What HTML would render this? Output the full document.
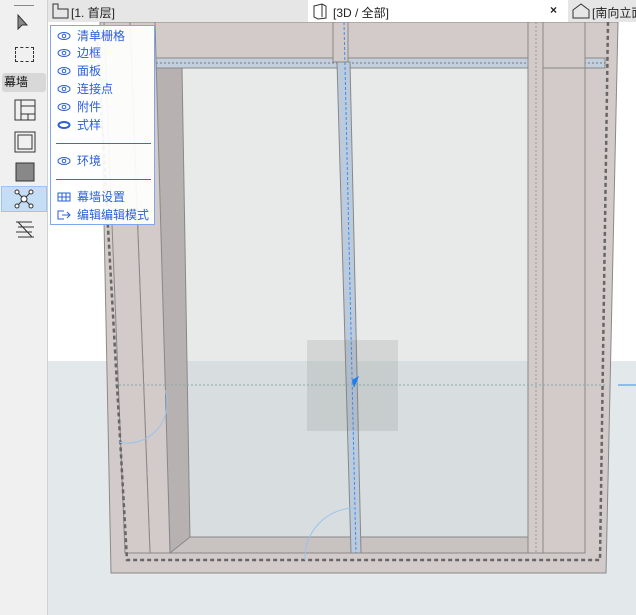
<!DOCTYPE html>
<html><head><meta charset="utf-8"><style>
*{margin:0;padding:0;box-sizing:border-box}
body{width:636px;height:615px;overflow:hidden;background:#fff;font-family:"Liberation Sans","Noto Sans CJK SC",sans-serif;position:relative}
.abs{position:absolute}
#tb{left:0;top:0;width:48px;height:615px;background:#f0f0f0;border-right:1px solid #d0d0d0}
#tabs{left:48px;top:0;width:588px;height:22px;background:#e6e6e6}
.tab{font-size:12px;color:#222;top:4px}
#menu{left:50px;top:25px;width:105px;height:200px;background:rgba(255,255,255,.93);border:1px solid #7fa7ee}
.mi{position:absolute;left:0;font-size:12px;color:#2a5fd8;height:16px;line-height:16px}
.mi span{position:absolute;left:26px;white-space:nowrap}
.mi svg{position:absolute;left:6px;top:3px}
.hr{position:absolute;left:5px;width:95px;height:1px;background:#3a6ad8}
</style></head><body>
<svg class="abs" style="left:48px;top:22px" width="588" height="593" viewBox="48 22 588 593">
<rect x="48" y="22" width="588" height="593" fill="#fff"/>
<rect x="48" y="361" width="588" height="254" fill="#e3e8ea"/>
<!-- outer frame -->
<polygon points="100,22 618,22 606,573 111,573" fill="#d3cbc9" stroke="#8a8a8a"/>
<!-- glass -->
<polygon points="180,68 528,68 528,540 190,540" fill="#e8eaea"/>
<polygon points="183,361 528,361 528,540 190,540" fill="#d8dedf"/>
<!-- top transom -->
<rect x="155" y="58" width="450" height="10" fill="#c3cfdc" stroke="#888"/>
<line x1="120" y1="63" x2="605" y2="63" stroke="#777" stroke-dasharray="2,2"/>
<!-- left jamb inner -->
<polygon points="155,68 182,68 190,540 170,553" fill="#b7b2b1" stroke="#888"/>
<polygon points="130,22 155,22 170,553 150,553" fill="#d3cbc9" stroke="#888"/>
<polygon points="104,22 130,22 150,553 125,553" fill="#d3cbc9" stroke="#888"/>
<!-- bottom sill -->
<polygon points="190,537 528,537 528,553 170,553" fill="#c8c2c1" stroke="#888"/>
<!-- right mullions -->
<rect x="528" y="22" width="15" height="531" fill="#d3cbc9" stroke="#888"/>
<rect x="543" y="22" width="42" height="531" fill="#d3cbc9" stroke="#888"/>
<line x1="543" y1="68" x2="585" y2="68" stroke="#888"/>
<line x1="536" y1="22" x2="536" y2="553" stroke="#999" stroke-dasharray="2,2"/>
<!-- center mullion -->
<rect x="333" y="22" width="15" height="40" fill="#d3cbc9" stroke="#888"/>
<polygon points="337,62 350,62 361,553 351,553" fill="#bccbdc" stroke="#888"/>
<line x1="344" y1="22" x2="356" y2="553" stroke="#3a8ef0" stroke-dasharray="3,2"/>
<!-- highlight square -->
<rect x="307" y="340" width="91" height="91" fill="rgba(120,120,120,.18)"/>
<polygon points="352,380 359,376 354,388" fill="#1a7ef0"/>
<!-- horizontal dotted -->
<line x1="115" y1="385" x2="605" y2="385" stroke="#8aa" stroke-dasharray="2,2"/>
<line x1="618" y1="385" x2="636" y2="385" stroke="#3a8ef0"/>
<!-- dashed boundary -->
<polyline points="97,35 127,560 600,560 608,22" fill="none" stroke="#666" stroke-width="2.5" stroke-dasharray="4,3"/>
<!-- arcs -->
<path d="M118,442 A40,40 0 0 0 165,390" fill="none" stroke="#9bc2ee"/>
<path d="M305,560 A50,50 0 0 1 355,508" fill="none" stroke="#9bc2ee"/>
</svg>
<div id="tb" class="abs">
<div class="abs" style="left:14px;top:5px;width:20px;height:1px;background:#888"></div>
<svg class="abs" style="left:15px;top:13px" width="16" height="18"><path d="M3,2 L3,16 L7,12 L12,12 Z" fill="#888" stroke="#333"/></svg>
<div class="abs" style="left:15px;top:47px;width:19px;height:15px;border:1px dashed #333"></div>
<div class="abs" style="left:2px;top:73px;width:44px;height:19px;background:#d8d8d8;border-radius:3px;font-size:12px;line-height:19px;padding-left:2px;color:#111">幕墙</div>
<svg class="abs" style="left:13px;top:98px" width="24" height="24"><rect x="2" y="2" width="20" height="20" fill="none" stroke="#333"/><path d="M8,2V22M8,8H22M8,16H22M15,16V22" stroke="#333" fill="none"/></svg>
<svg class="abs" style="left:13px;top:130px" width="24" height="24"><rect x="2" y="2" width="20" height="20" fill="none" stroke="#333"/><rect x="5" y="5" width="14" height="14" fill="none" stroke="#333"/></svg>
<svg class="abs" style="left:13px;top:160px" width="24" height="24"><rect x="3" y="3" width="18" height="18" fill="#888" stroke="#333"/></svg>
<div class="abs" style="left:1px;top:186px;width:46px;height:26px;background:#c5def5;border:1px solid #9cc6ef"></div>
<svg class="abs" style="left:13px;top:188px" width="22" height="22"><path d="M4,4L18,18M18,4L4,18" stroke="#333"/><circle cx="11" cy="11" r="3" fill="#fff" stroke="#333"/><circle cx="4" cy="4" r="2" fill="#fff" stroke="#333"/><circle cx="18" cy="4" r="2" fill="#fff" stroke="#333"/><circle cx="4" cy="18" r="2" fill="#fff" stroke="#333"/><circle cx="18" cy="18" r="2" fill="#fff" stroke="#333"/></svg>
<svg class="abs" style="left:14px;top:219px" width="22" height="20"><path d="M2,3H18M4,8H20M2,13H18M4,18H20M4,3L18,18" stroke="#333" fill="none"/></svg>
</div>
<div id="tabs" class="abs"></div>
<svg class="abs" style="left:52px;top:3px" width="18" height="16"><path d="M1,1H6V6H11V6H16V15H1Z" fill="none" stroke="#333"/></svg>
<div class="abs tab" style="left:71px">[1. 首层]</div>
<div class="abs" style="left:308px;top:0;width:260px;height:22px;background:#fff"></div>
<svg class="abs" style="left:312px;top:3px" width="16" height="17"><path d="M2,3L10,1L14,3V15L6,16L2,14Z M10,1V14" fill="none" stroke="#333"/></svg>
<div class="abs tab" style="left:333px">[3D / 全部]</div>
<div class="abs tab" style="left:550px;top:3px;font-weight:bold">×</div>
<svg class="abs" style="left:572px;top:3px" width="18" height="16"><path d="M1,7L9,1L17,7V15H1Z" fill="none" stroke="#333"/></svg>
<div class="abs tab" style="left:592px;white-space:nowrap">[南向立面</div>
<div id="menu" class="abs">
<div class="mi" style="top:2px"><svg width="14" height="10"><ellipse cx="7" cy="5" rx="6" ry="3.5" fill="none" stroke="#2a5fd8"/><circle cx="7" cy="5" r="1.8" fill="none" stroke="#2a5fd8"/></svg><span>清单栅格</span></div>
<div class="mi" style="top:19px"><svg width="14" height="10"><ellipse cx="7" cy="5" rx="6" ry="3.5" fill="none" stroke="#2a5fd8"/><circle cx="7" cy="5" r="1.8" fill="none" stroke="#2a5fd8"/></svg><span>边框</span></div>
<div class="mi" style="top:37px"><svg width="14" height="10"><ellipse cx="7" cy="5" rx="6" ry="3.5" fill="none" stroke="#2a5fd8"/><circle cx="7" cy="5" r="1.8" fill="none" stroke="#2a5fd8"/></svg><span>面板</span></div>
<div class="mi" style="top:55px"><svg width="14" height="10"><ellipse cx="7" cy="5" rx="6" ry="3.5" fill="none" stroke="#2a5fd8"/><circle cx="7" cy="5" r="1.8" fill="none" stroke="#2a5fd8"/></svg><span>连接点</span></div>
<div class="mi" style="top:73px"><svg width="14" height="10"><ellipse cx="7" cy="5" rx="6" ry="3.5" fill="none" stroke="#2a5fd8"/><circle cx="7" cy="5" r="1.8" fill="none" stroke="#2a5fd8"/></svg><span>附件</span></div>
<div class="mi" style="top:91px"><svg width="14" height="10"><ellipse cx="7" cy="5" rx="5.5" ry="3" fill="none" stroke="#2a5fd8" stroke-width="2"/></svg><span>式样</span></div>
<div class="hr" style="top:117px"></div>
<div class="mi" style="top:127px"><svg width="14" height="10"><ellipse cx="7" cy="5" rx="6" ry="3.5" fill="none" stroke="#2a5fd8"/><circle cx="7" cy="5" r="1.8" fill="none" stroke="#2a5fd8"/></svg><span>环境</span></div>
<div class="hr" style="top:153px"></div>
<div class="mi" style="top:163px"><svg width="14" height="10"><rect x="1" y="1" width="12" height="8" fill="none" stroke="#2a5fd8"/><path d="M5,1V9M9,1V9M1,5H13" stroke="#2a5fd8"/></svg><span>幕墙设置</span></div>
<div class="mi" style="top:181px"><svg width="14" height="10"><path d="M7,1H1V9H7M5,5H13M10,2L13,5L10,8" fill="none" stroke="#2a5fd8"/></svg><span>编辑编辑模式</span></div>
</div>
</body></html>
